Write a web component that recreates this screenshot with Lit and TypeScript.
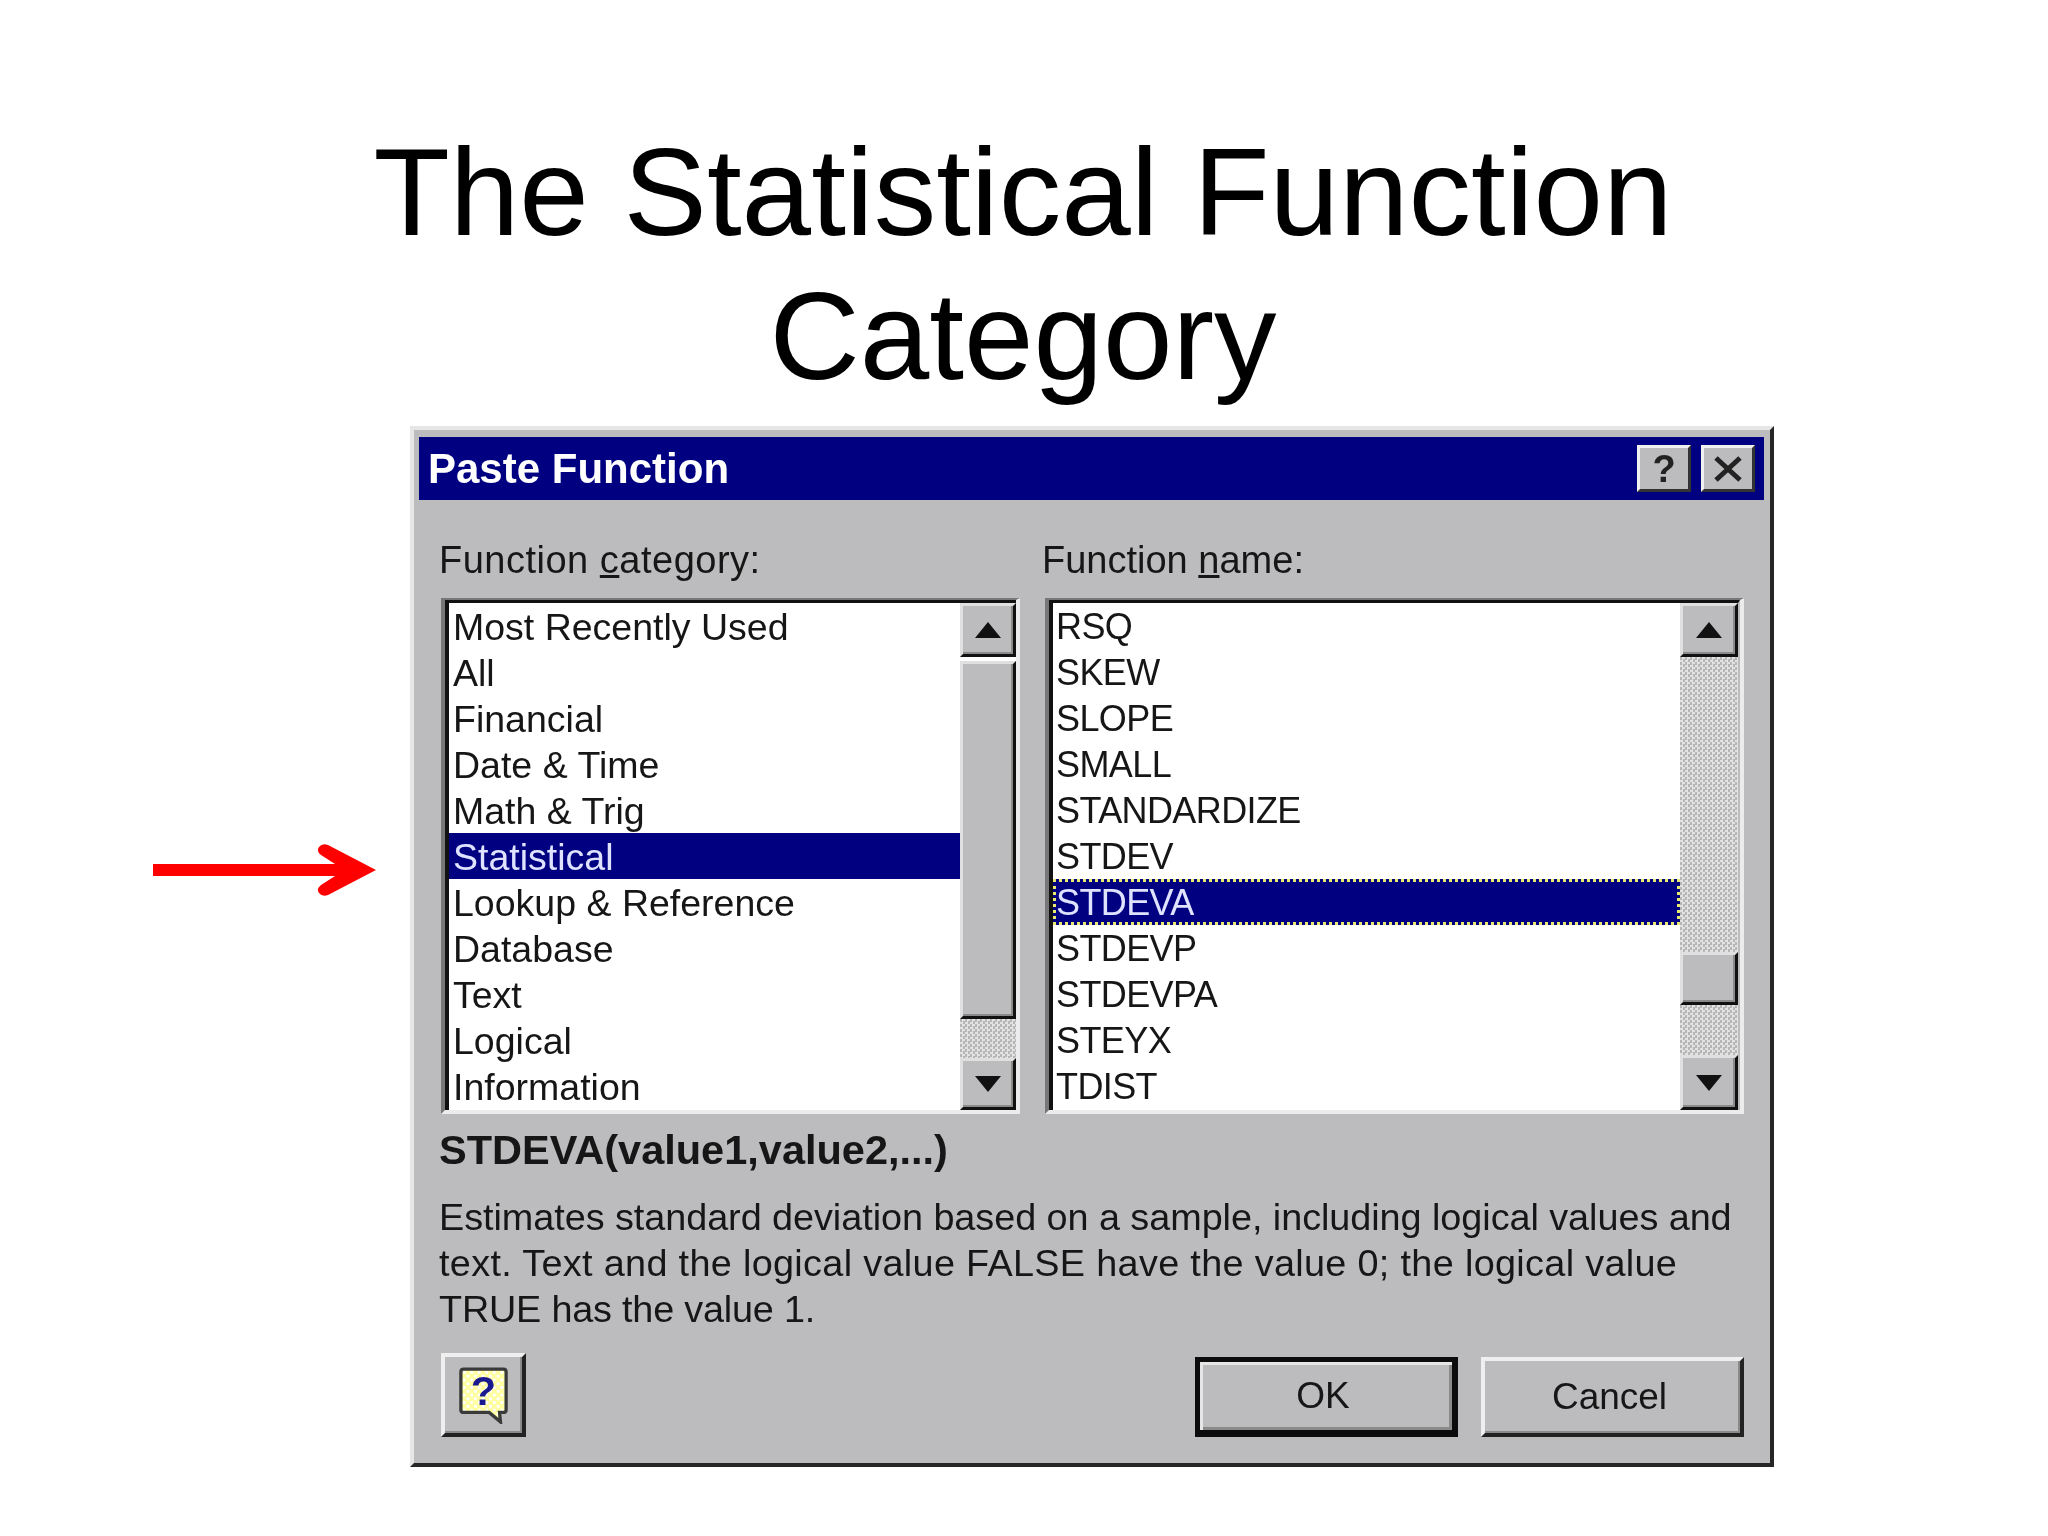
import { LitElement, html, css } from "lit";
import { customElement } from "lit/decorators.js";

const categories = ["Most Recently Used","All","Financial","Date & Time","Math & Trig","Statistical","Lookup & Reference","Database","Text","Logical","Information"];
const names = ["RSQ","SKEW","SLOPE","SMALL","STANDARDIZE","STDEV","STDEVA","STDEVP","STDEVPA","STEYX","TDIST"];

@customElement("app-root")
export class AppRoot extends LitElement {
  static styles = css`
    :host { display:block; width:2048px; height:1536px; background:#fff; overflow:hidden; font-family:"Liberation Sans",Arial,sans-serif; color:#161616; }
    h1 { margin:0; padding-top:120px; height:426px; box-sizing:border-box; font-weight:400; font-size:125px; line-height:144px; text-align:center; color:#000; width:2046px; }
    .stage { display:flex; align-items:flex-start; padding-left:153px; }
    .arrow { width:223px; height:52px; margin-top:418px; flex:none; }
    .dialog { margin-left:34px; width:1364px; height:1041px; box-sizing:border-box; border:4px solid; border-color:#e6e6e6 #262626 #262626 #e6e6e6; padding:7px 6px 0 5px; background:#bcbcbe; font-size:37.5px; line-height:46px; filter:blur(.6px); }
    .titlebar { height:63px; background:#000080; display:flex; align-items:center; padding:0 9px; gap:10px; color:#fff; font-weight:700; font-size:42px; }
    .titlebar .t { flex:1; }
    .cap { width:54px; height:47px; box-sizing:border-box; background:#bcbcbe; border:3px solid; border-color:#f0f0f0 #333 #333 #f0f0f0; display:flex; align-items:center; justify-content:center; color:#222; font-size:38px; font-weight:700; line-height:1; }
    .body { padding:37px 20px 0; }
    .cols { display:grid; grid-template-columns:581px 1fr; column-gap:22px; }
    .label { height:46px; margin-bottom:15px; font-size:38px; line-height:47px; }
    .c1 .label { letter-spacing:.5px; }
    .list { height:516px; box-sizing:border-box; border-style:solid; border-width:2px 4px 4px 4px; border-color:#777 #ececec #ececec #777; display:flex; background:#fff; }
    .c1 .list { margin-left:2px; }
    .c2 .list { margin-left:3px; }
    .rows { flex:1; min-width:0; border-top:3px solid #111; border-left:4px solid #111; overflow:hidden; }
    .row { height:46px; line-height:48px; padding-left:4px; white-space:nowrap; }
    .sel { background:#000080; color:#dfe3ff; }
    .focus { outline:3px dotted #eaea70; outline-offset:-3px; }
    .c2 .row { font-size:36px; letter-spacing:-.6px; padding-left:3px; }
    .scroll { display:flex; flex-direction:column; width:56px; flex:none; box-sizing:border-box; border-top:3px solid #111; background:#bcbcbe; }
    .c2 .scroll { width:60px; border-right:2px solid #bcbcbe; }
    .sb { box-sizing:border-box; background:#bcbcbe; border:3px solid; border-color:#e0e0e0 #111 #111 #e0e0e0; box-shadow:inset -2px -2px 0 #8a8a8a; display:flex; align-items:center; justify-content:center; flex:none; }
    .up { height:54px; }
    .dn { height:52px; }
    .c2 .dn { height:55px; }
    .gap { height:4px; flex:none; background:#fff; }
    .track { background:repeating-conic-gradient(#e2e2e2 0 25%, #b6b6b6 0 50%) 0 0/5px 5px; }
    .fill { flex:1; }
    .tail { height:50px; flex:none; }
    .thumb1 { height:358px; }
    .thumb2 { height:53px; }
    .up svg, .dn svg { width:26px; height:16px; display:block; }
    .sig { margin-top:13px; font-weight:700; font-size:41.5px; height:46px; }
    .desc { margin-top:21px; height:138px; font-size:37.8px; }
    .l1 { letter-spacing:-.05px; }
    .l2 { letter-spacing:.33px; }
    .l3 { letter-spacing:-.2px; }
    .actions { margin-top:21px; display:flex; align-items:flex-end; gap:23px; }
    .btn { box-sizing:border-box; background:#bcbcbe; border:4px solid; border-color:#efefef #222 #222 #efefef; box-shadow:inset -2px -2px 0 #8a8a8a; display:flex; align-items:center; justify-content:center; }
    .help { width:85px; height:84px; margin-left:2px; margin-right:auto; }
    .help svg { width:49px; height:57px; display:block; }
    .wide { width:263px; height:80px; font-size:37px; padding-right:6px; }
    .ok { border:5px solid #0c0c0c; border-bottom-width:7px; border-right-width:6px; box-shadow:inset 3px 3px 0 #e6e6e6, inset -3px -3px 0 #8a8a8a; }
  `;

  private tri(down: boolean) {
    return html`<svg viewBox="0 0 26 16"><polygon fill="#111" points=${down ? "0,0 26,0 13,16" : "0,16 26,16 13,0"}></polygon></svg>`;
  }

  render() {
    return html`
      <h1>The Statistical Function<br />Category</h1>
      <div class="stage">
        <svg class="arrow" viewBox="0 0 223 52" aria-hidden="true">
          <path d="M0 20 H182 L168 11 Q163 7 166 3 Q169 -1 175 1 L223 26 L175 51 Q169 53 166 49 Q163 45 168 41 L182 32 H0 Z" fill="#ff0000"></path>
        </svg>
        <div class="dialog">
          <div class="titlebar">
            <span class="t">Paste Function</span>
            <div class="cap">?</div>
            <div class="cap">
              <svg width="30" height="26" viewBox="0 0 30 26"><path d="M3 2 L27 24 M27 2 L3 24" stroke="#222" stroke-width="5"></path></svg>
            </div>
          </div>
          <div class="body">
            <div class="cols">
              <div class="c1">
                <div class="label">Function <u>c</u>ategory:</div>
                <div class="list">
                  <div class="rows">${categories.map((c) => html`<div class="row ${c === "Statistical" ? "sel" : ""}">${c}</div>`)}</div>
                  <div class="scroll">
                    <div class="sb up">${this.tri(false)}</div>
                    <div class="gap"></div>
                    <div class="sb thumb1"></div>
                    <div class="track fill"></div>
                    <div class="sb dn">${this.tri(true)}</div>
                  </div>
                </div>
              </div>
              <div class="c2">
                <div class="label">Function <u>n</u>ame:</div>
                <div class="list">
                  <div class="rows">${names.map((c) => html`<div class="row ${c === "STDEVA" ? "sel focus" : ""}">${c}</div>`)}</div>
                  <div class="scroll">
                    <div class="sb up">${this.tri(false)}</div>
                    <div class="track fill"></div>
                    <div class="sb thumb2"></div>
                    <div class="track tail"></div>
                    <div class="sb dn">${this.tri(true)}</div>
                  </div>
                </div>
              </div>
            </div>
            <div class="sig">STDEVA(value1,value2,...)</div>
            <div class="desc">
              <div class="l1">Estimates standard deviation based on a sample, including logical values and</div>
              <div class="l2">text. Text and the logical value FALSE have the value 0; the logical value</div>
              <div class="l3">TRUE has the value 1.</div>
            </div>
            <div class="actions">
              <div class="btn help">
                <svg viewBox="0 0 52 60">
                  <defs>
                    <pattern id="dots" width="8" height="8" patternUnits="userSpaceOnUse">
                      <rect width="8" height="8" fill="#ffffa0"></rect>
                      <rect x="0" y="0" width="3" height="3" fill="#ffffff"></rect>
                      <rect x="4" y="4" width="3" height="3" fill="#ffffff"></rect>
                    </pattern>
                  </defs>
                  <path d="M5 2 H47 Q50 2 50 5 V45 Q50 48 47 48 H43 L44 58 L32 48 H5 Q2 48 2 45 V5 Q2 2 5 2 Z" fill="url(#dots)" stroke="#3a3a3a" stroke-width="3.5"></path>
                  <text x="26" y="40" text-anchor="middle" font-family="Liberation Sans" font-weight="700" font-size="44" fill="#1a1a90">?</text>
                </svg>
              </div>
              <div class="btn wide ok">OK</div>
              <div class="btn wide">Cancel</div>
            </div>
          </div>
        </div>
      </div>
    `;
  }
}
